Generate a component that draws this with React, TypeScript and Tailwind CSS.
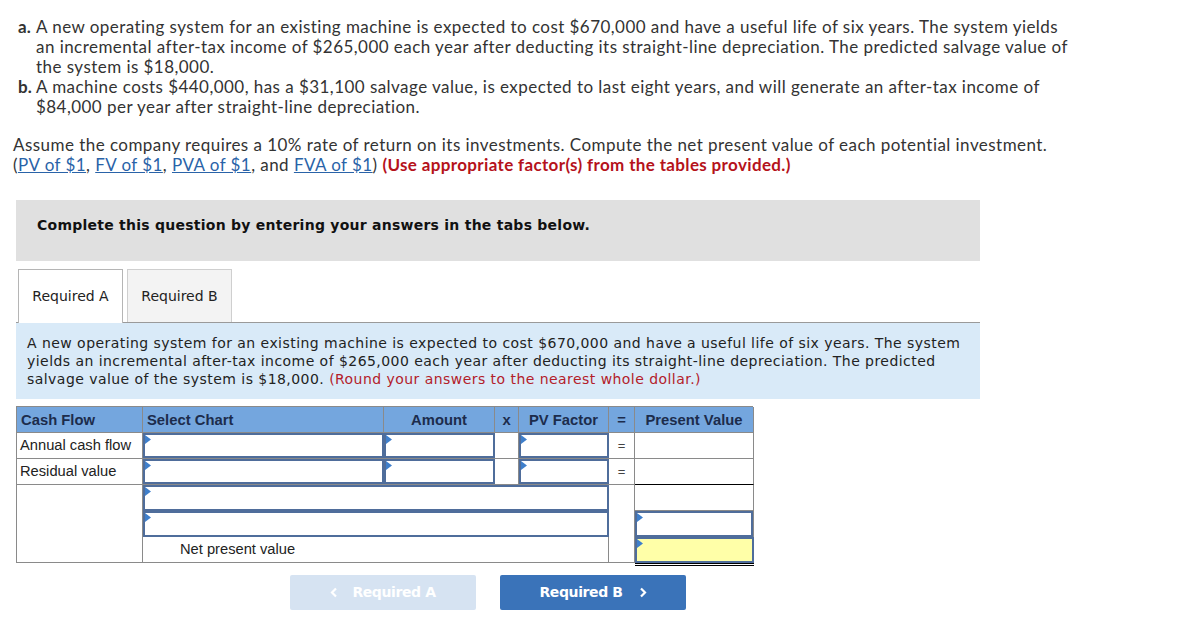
import React from "react";

const Tri = () => (
  <svg className="absolute left-0 top-0" width="6" height="9" viewBox="0 0 6 9">
    <polygon points="0,0 6,4.5 0,9" fill="#3f7fcb" />
  </svg>
);

const Input = ({ yellow = false, dbl = false }: { yellow?: boolean; dbl?: boolean }) => (
  <div className={`relative h-full w-full border-2 border-[#4f6d9b] ${yellow ? "bg-[#ffffa8]" : "bg-white"}`}>
    <Tri />
    {dbl && <div className="absolute left-[-2px] right-[-2px] bottom-[-5px] h-[3px] border-t border-b border-black" />}
  </div>
);

const Chev = ({ left = false }: { left?: boolean }) => (
  <svg width="8" height="11" viewBox="0 0 8 11">
    <polyline
      points={left ? "6,1.5 2,5.5 6,9.5" : "2,1.5 6,5.5 2,9.5"}
      fill="none"
      stroke="white"
      strokeWidth="2.2"
    />
  </svg>
);

export default function App() {
  const proxima = { fontFamily: "Lato, 'Open Sans', sans-serif" };
  const verdana = { fontFamily: "'DejaVu Sans', Verdana, sans-serif" };
  const arial = { fontFamily: "'Liberation Sans', Arial, sans-serif" };
  const hdr = "bg-[#74a6de] border-r border-b border-[#8a8a8a] text-[14.8px] font-bold text-[#1c2c4c] flex items-center pt-[1px]";
  const cell = "border-r border-b border-[#8a8a8a] bg-white";
  return (
    <div className="w-[1187px] h-[639px] bg-white overflow-hidden relative">
      <div className="pt-[17px] pl-[18px] text-[17px] leading-[20px] tracking-[0.45px] text-[#333]" style={proxima}>
        <div className="flex">
          <span className="w-[18px] font-bold tracking-normal">a.</span>
          <div>
            <div className="whitespace-nowrap">A new operating system for an existing machine is expected to cost $670,000 and have a useful life of six years. The system yields</div>
            <div className="whitespace-nowrap">an incremental after-tax income of $265,000 each year after deducting its straight-line depreciation. The predicted salvage value of</div>
            <div className="whitespace-nowrap">the system is $18,000.</div>
          </div>
        </div>
        <div className="flex">
          <span className="w-[18px] font-bold tracking-normal">b.</span>
          <div>
            <div className="whitespace-nowrap">A machine costs $440,000, has a $31,100 salvage value, is expected to last eight years, and will generate an after-tax income of</div>
            <div className="whitespace-nowrap">$84,000 per year after straight-line depreciation.</div>
          </div>
        </div>
      </div>
      <div className="pl-[13px] mt-[18px] text-[17px] leading-[20px] tracking-[0.45px] text-[#333]" style={proxima}>
        <div className="whitespace-nowrap">Assume the company requires a 10% rate of return on its investments. Compute the net present value of each potential investment.</div>
        <div className="whitespace-nowrap">
          (<span className="text-[#2a63a8] underline">PV of $1</span>, <span className="text-[#2a63a8] underline">FV of $1</span>, <span className="text-[#2a63a8] underline">PVA of $1</span>, and <span className="text-[#2a63a8] underline">FVA of $1</span>) <span className="font-bold text-[#b5121b] tracking-[0.35px]">(Use appropriate factor(s) from the tables provided.)</span>
        </div>
      </div>

      <div className="ml-[16px] mt-[25px] w-[964px] h-[61px] bg-[#e0e0e0] pl-[21px] pt-[15px] text-[14px] font-bold tracking-[0.25px] text-[#111]" style={verdana}>
        Complete this question by entering your answers in the tabs below.
      </div>

      <div className="ml-[18px] mt-[8px] h-[53px] flex items-start gap-[4px]" style={verdana}>
        <div className="w-[105px] h-[54px] bg-white border border-b-0 border-[#b5b5b5] flex items-center justify-center text-[14px] text-[#222] relative z-10">Required A</div>
        <div className="w-[105px] h-[53px] bg-[#f3f3f3] border border-b-0 border-[#cfcfcf] flex items-center justify-center text-[14px] text-[#222]">Required B</div>
      </div>
      <div className="ml-[16px] w-[964px] h-[77px] bg-[#d9eaf8] border-t border-[#9a9a9a] pl-[11px] pt-[11px] text-[14px] leading-[18px] tracking-[0.45px] text-[#222]" style={verdana}>
        <div className="whitespace-nowrap">A new operating system for an existing machine is expected to cost $670,000 and have a useful life of six years. The system</div>
        <div className="whitespace-nowrap">yields an incremental after-tax income of $265,000 each year after deducting its straight-line depreciation. The predicted</div>
        <div className="whitespace-nowrap">salvage value of the system is $18,000. <span className="text-[#b3202a]">(Round your answers to the nearest whole dollar.)</span></div>
      </div>

      <div
        className="ml-[16px] mt-[7px] grid border-l border-t border-[#8a8a8a] w-[737px]"
        style={{ ...arial, gridTemplateColumns: "126px 241px 111px 24px 90px 26px 119px", gridTemplateRows: "26px 26px 26px 26px 26px 26px" }}
      >
        <div className={`${hdr} pl-[4px]`}>Cash Flow</div>
        <div className={`${hdr} pl-[4px]`}>Select Chart</div>
        <div className={`${hdr} justify-center`}>Amount</div>
        <div className={`${hdr} justify-center`}>x</div>
        <div className={`${hdr} justify-center`}>PV Factor</div>
        <div className={`${hdr} justify-center`}>=</div>
        <div className={`${hdr} justify-center`}>Present Value</div>

        <div className={`${cell} pl-[3px] flex items-center text-[14.7px] text-[#222]`}>Annual cash flow</div>
        <div className="border-b border-[#8a8a8a]"><Input /></div>
        <div className="border-b border-[#8a8a8a]"><Input /></div>
        <div className={cell}></div>
        <div className="border-b border-[#8a8a8a]"><Input /></div>
        <div className={`${cell} flex items-center justify-center text-[13px] text-[#444]`}>=</div>
        <div className={cell}></div>

        <div className={`${cell} pl-[3px] flex items-center text-[14.7px] text-[#222]`}>Residual value</div>
        <div className="border-b border-[#8a8a8a]"><Input /></div>
        <div className="border-b border-[#8a8a8a]"><Input /></div>
        <div className={cell}></div>
        <div className="border-b border-[#8a8a8a]"><Input /></div>
        <div className={`${cell} flex items-center justify-center text-[13px] text-[#444]`}>=</div>
        <div className="border-r border-[#8a8a8a] border-b-black border-b bg-white"></div>

        <div className={`${cell} row-span-3`}></div>
        <div className="col-span-4"><Input /></div>
        <div className={`${cell} row-span-3`}></div>
        <div className="border-r border-b border-[#8a8a8a] bg-white"></div>

        <div className="col-span-4"><Input /></div>
        <div className="border-r border-[#8a8a8a]"><Input /></div>

        <div className={`${cell} col-span-4 pl-[37px] flex items-center text-[14.7px] text-[#222]`}>Net present value</div>
        <div className="relative"><Input yellow dbl /></div>
      </div>

      <div className="mt-[12px] ml-[290px] flex gap-[24px]" style={verdana}>
        <div className="w-[186px] h-[35px] bg-[#d6e3f2] rounded-[2px] flex items-center justify-center text-white text-[14px] font-bold tracking-[-0.4px]">
          <span className="mr-[14px] flex"><Chev left /></span>Required A
        </div>
        <div className="w-[186px] h-[35px] bg-[#3a73b9] rounded-[2px] flex items-center justify-center text-white text-[14px] font-bold tracking-[-0.4px]">
          Required B<span className="ml-[16px] flex"><Chev /></span>
        </div>
      </div>
    </div>
  );
}
